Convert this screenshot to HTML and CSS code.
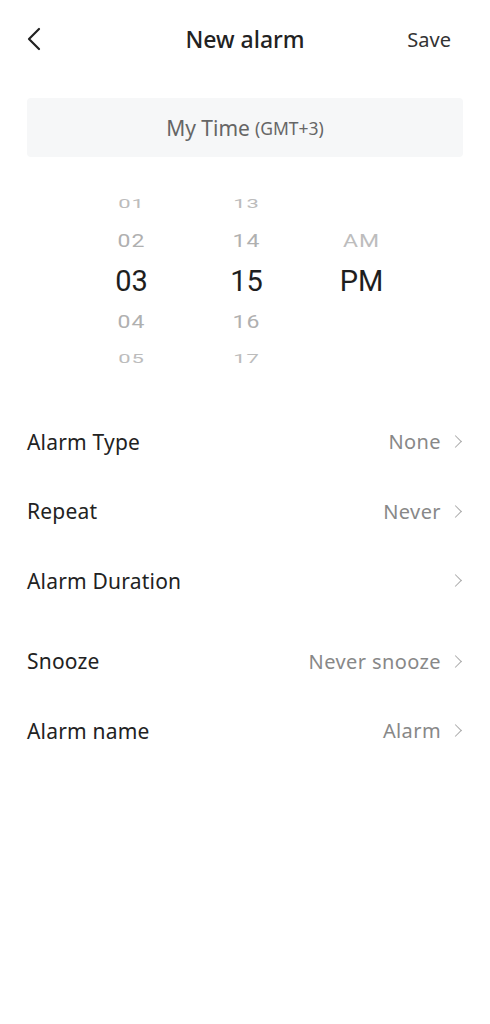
FILE: index.html
```html
<!DOCTYPE html>
<html lang="en">
<head>
  <meta charset="UTF-8" />
  <meta name="viewport" content="width=device-width, initial-scale=1.0"/>
  <title>New alarm</title>
  <link rel="stylesheet" href="styles.css">
</head>
<body>
  <div class="screen">
    <header class="topbar">
      <button class="back" aria-label="Back">
        <svg width="14" height="24" viewBox="0 0 14 24"><path d="M12 2 L2 12 L12 22" fill="none" stroke="#222" stroke-width="2.2" stroke-linecap="round" stroke-linejoin="round"/></svg>
      </button>
      <h1>New alarm</h1>
      <button class="save">Save</button>
    </header>

    <div class="zone">
      <span class="zone-main">My Time</span>
      <span class="zone-sub">(GMT+3)</span>
    </div>

    <div class="picker">
      <div class="col">
        <span class="far">01</span>
        <span class="near">02</span>
        <span class="sel">03</span>
        <span class="near">04</span>
        <span class="far">05</span>
      </div>
      <div class="col">
        <span class="far">13</span>
        <span class="near">14</span>
        <span class="sel">15</span>
        <span class="near">16</span>
        <span class="far">17</span>
      </div>
      <div class="col ampm">
        <span class="far"></span>
        <span class="near">AM</span>
        <span class="sel">PM</span>
        <span class="near"></span>
        <span class="far"></span>
      </div>
    </div>

    <ul class="settings">
      <li><span class="label">Alarm Type</span><span class="value">None</span><i class="chev"></i></li>
      <li><span class="label">Repeat</span><span class="value">Never</span><i class="chev"></i></li>
      <li><span class="label">Alarm Duration</span><span class="value"></span><i class="chev"></i></li>
      <li class="gap"><span class="label">Snooze</span><span class="value">Never snooze</span><i class="chev"></i></li>
      <li><span class="label">Alarm name</span><span class="value">Alarm</span><i class="chev"></i></li>
    </ul>
  </div>
</body>
</html>
```

FILE: styles.css
```css
* {
  box-sizing: border-box;
}

body {
  margin: 0;
  background: #fff;
  font-family: "Noto Sans", "Open Sans", Arial, sans-serif;
  color: #222;
}

.screen {
  width: 490px;
  min-height: 1024px;
  padding: 0 27px;
}

.topbar {
  display: flex;
  align-items: center;
  justify-content: space-between;
  height: 78px;
}

.back,
.save {
  background: none;
  border: none;
  padding: 0;
  cursor: pointer;
  font-family: inherit;
}

.back {
  width: 70px;
  text-align: left;
  display: flex;
  align-items: center;
}

.topbar h1 {
  margin: 0;
  font-size: 23px;
  font-weight: 500;
  color: #222;
}

.save {
  width: 70px;
  padding-right: 12px;
  text-align: right;
  font-size: 20px;
  color: #333;
}

.zone {
  margin-top: 20px;
  height: 59px;
  background: #f6f7f8;
  border-radius: 4px;
  display: flex;
  align-items: center;
  justify-content: center;
  gap: 5px;
  color: #666;
}

.zone-main {
  font-size: 21px;
}

.zone-sub {
  font-size: 17.5px;
}

.picker {
  display: grid;
  grid-template-columns: repeat(3, 115px);
  justify-content: center;
  padding-left: 3px;
  margin-top: 30px;
  font-family: Roboto, "Noto Sans", sans-serif;
}

.col {
  display: grid;
  grid-template-rows: 34px 40px 41px 40px 34px;
  justify-items: center;
  align-items: center;
}

.col span {
  display: block;
  line-height: 1;
}

.far {
  font-size: 22px;
  color: #bcbcbc;
  letter-spacing: 1px;
  transform: scaleY(0.55);
}

.near {
  font-size: 23px;
  color: #b0b0b0;
  letter-spacing: 1px;
  transform: scaleY(0.78);
}

.sel {
  font-size: 29px;
  color: #1e1e1e;
}

.ampm .near {
  color: #bdbdbd;
}

.settings {
  list-style: none;
  margin: 31px 0 0;
  padding: 0;
}

.settings li {
  display: flex;
  align-items: center;
  height: 69.5px;
}

.settings li.gap {
  margin-top: 11px;
}

.label {
  flex: 1;
  font-size: 21px;
  letter-spacing: 0.2px;
  color: #222;
}

.value {
  font-size: 20px;
  letter-spacing: 0.4px;
  color: #888;
}

.chev {
  width: 9px;
  height: 9px;
  border-top: 1.8px solid #aaa;
  border-right: 1.8px solid #aaa;
  transform: rotate(45deg);
  margin-left: 10px;
  margin-right: 3px;
}
```
